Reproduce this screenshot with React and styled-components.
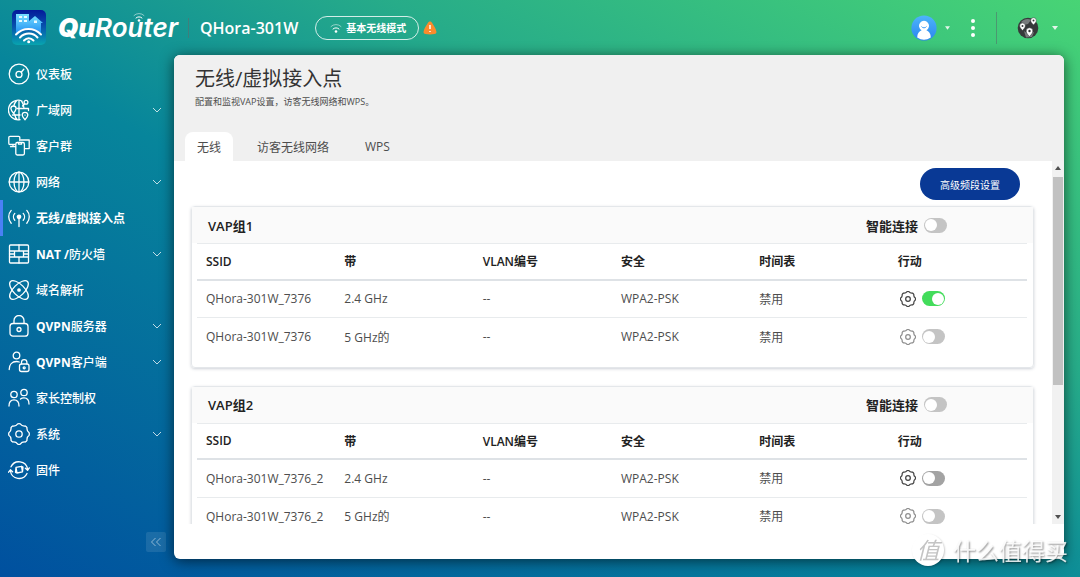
import React, { useState } from 'react';
import styled, { createGlobalStyle, css } from 'styled-components';


const GlobalStyle = createGlobalStyle`
  * {
    box-sizing: border-box;
  }

  body {
    margin: 0;
    font-family: 'Open Sans', 'Noto Sans CJK SC', sans-serif;
    font-size: 12px;
    color: #4d4d4d;
  }

  button {
    padding: 0;
    border: 0;
    background: none;
    font: inherit;
    color: inherit;
    cursor: pointer;
  }

  svg {
    display: block;
  }
`;

const Page = styled.div`
  display: flex;
  flex-direction: column;
  height: 100vh;
  overflow: hidden;
  background: linear-gradient(to top right, #00509f 0%, #07859b 45%, #27ac89 68%, #48d475 100%);
`;

const Header = styled.header`
  display: flex;
  align-items: center;
  height: 55px;
  padding: 0 22px 0 11px;
  color: #fff;
`;

const Brand = styled.a`
  display: flex;
  align-items: center;
  gap: 11px;
  color: #fff;
  text-decoration: none;
`;

const BrandName = styled.span`
  position: relative;
  font-family: Inter, sans-serif;
  font-size: 26px;
  font-style: italic;
  font-weight: 600;
  line-height: 34px;

  b {
    font-weight: 900;
  }

  svg {
    position: absolute;
    top: 0;
    left: 75px;
  }
`;

const Divider = styled.span`
  width: 1px;
  height: ${(props) => props.$height}px;
  background-color: ${(props) => props.color};
`;

const DeviceInfo = styled.div`
  display: flex;
  align-items: center;
  margin-left: 10px;
`;

const Model = styled.h1`
  margin: 0 17px 0 11px;
  font-size: 16px;
  font-weight: 600;
  line-height: 24px;
`;

const ModeButton = styled.button`
  display: flex;
  align-items: center;
  gap: 4px;
  height: 24px;
  margin-right: 4px;
  padding: 0 12px 0 14px;
  border: 1px solid rgba(255, 255, 255, 0.8);
  border-radius: 12px;
  font-size: 10px;
  font-weight: 600;
`;

const HeaderTools = styled.div`
  display: flex;
  align-items: center;
  gap: 20px;
  margin-left: auto;
`;

const ToolButton = styled.button`
  display: flex;
  align-items: center;
  gap: ${(props) => props.$gap || 0}px;
`;

const Body = styled.div`
  display: flex;
  flex: 1;
  min-height: 0;
  padding: 0 16px 18px 0;
`;

const Sidebar = styled.nav`
  display: flex;
  flex-direction: column;
  justify-content: space-between;
  width: 174px;
  color: #fff;
`;

const Menu = styled.ul`
  margin: 0;
  padding: 1px 0 0;
  list-style: none;
`;

const MenuLink = styled.a`
  display: flex;
  align-items: center;
  gap: 6px;
  height: 36px;
  padding: 0 12px 0 5px;
  border-left: 3px solid ${(props) => (props.$active ? '#4a80f5' : 'transparent')};
  color: #fff;
  font-weight: ${(props) => (props.$active ? 700 : 500)};
  text-decoration: none;

  span {
    flex: 1;
  }

  b {
    font-weight: 700;
  }
`;

const CollapseButton = styled.button`
  display: flex;
  align-items: center;
  justify-content: center;
  align-self: flex-end;
  width: 20px;
  height: 20px;
  margin: 0 8px 7px 0;
  border-radius: 2px;
  background-color: rgba(255, 255, 255, 0.1);
`;

const Panel = styled.main`
  display: flex;
  flex: 1;
  flex-direction: column;
  min-width: 0;
  padding-bottom: 35px;
  border-radius: 6px;
  background-color: #fff;
  box-shadow: 0 2px 14px rgba(0, 0, 0, 0.6);
`;

const PanelHeader = styled.div`
  padding: 10px 11px 0;
  border-radius: 6px 6px 0 0;
  background-color: #f0f0f0;
`;

const Title = styled.h2`
  margin: 0 10px;
  color: #333;
  font-size: 20px;
  font-weight: 400;
  line-height: 28px;
`;

const Subtitle = styled.p`
  margin: 0 10px 21px;
  font-size: 9px;
  line-height: 18px;
`;

const Tabs = styled.div`
  display: flex;
  gap: 12px;
`;

const Tab = styled.button`
  height: 29px;
  padding: 0 12px;
  border-radius: 8px 8px 0 0;
  ${(props) => props.$active && css`
    background-color: #fff;
  `}
`;

const ScrollBox = styled.div`
  display: flex;
  flex: 1;
  min-height: 0;
`;

const ScrollContent = styled.div`
  flex: 1;
  min-width: 0;
  padding: 7px 18px 18px 17px;
  overflow-y: auto;
  scrollbar-width: none;
`;

const ScrollBar = styled.div`
  display: flex;
  flex-direction: column;
  align-items: center;
  justify-content: space-between;
  width: 12px;
  padding: 5px 1px;
  background-color: #f1f1f1;
`;

const ScrollThumb = styled.div`
  width: 10px;
  height: 59%;
  margin: 7px 0 auto;
  background-color: #c1c1c1;
`;

const Actions = styled.div`
  display: flex;
  justify-content: flex-end;
  padding: 0 14px 6px 0;
`;

const PrimaryButton = styled.button`
  height: 32px;
  padding: 0 20px;
  border-radius: 16px;
  background-color: #093995;
  color: #fff;
  font-size: 10px;
`;

const Card = styled.section`
  margin-bottom: 18px;
  padding-bottom: 11px;
  border: 1px solid #e4e7ea;
  border-radius: 4px;
  box-shadow: 0 1px 3px rgba(60, 70, 100, 0.25);
`;

const CardHeader = styled.div`
  display: flex;
  align-items: center;
  justify-content: space-between;
  height: 36px;
  padding: 0 86px 0 16px;
  background-color: #fafafa;
  color: #222;
`;

const CardTitle = styled.h3`
  margin: 0;
  font-size: 13px;
  font-weight: 600;
`;

const SmartConnect = styled.label`
  display: flex;
  align-items: center;
  gap: 6px;
  font-size: 13px;
  font-weight: 700;
`;

const TableWrapper = styled.div`
  padding: 0 6px 0 5px;
`;

const Table = styled.table`
  width: 100%;
  border-collapse: collapse;
  table-layout: fixed;

  th,
  td {
    padding: 0 0 0 9px;
    text-align: left;
  }

  th {
    height: 36px;
    border-top: 1px solid #e8ebed;
    border-bottom: 2px solid #dee2e6;
    color: #222;
    font-weight: 600;
  }

  td {
    height: 38px;
  }

  tbody tr + tr td {
    border-top: 1px solid #e8ebed;
  }
`;

const RowActions = styled.div`
  display: flex;
  align-items: center;
  gap: 6px;
  padding-left: 2px;
`;

const GearButton = styled.button`
  color: #444;
  opacity: ${(props) => (props.disabled ? 0.6 : 1)};
`;

const Switch = styled.input`
  display: flex;
  align-items: center;
  width: 23px;
  height: 15px;
  margin: 0;
  padding: 1px;
  border-radius: 8px;
  appearance: none;
  background-color: ${(props) => (props.$dim ? '#c4c4c4' : '#a3a3a3')};

  &::before {
    content: '';
    width: 12px;
    height: 12px;
    border-radius: 50%;
    background-color: #fff;
  }

  &:checked {
    justify-content: flex-end;
    background-color: #43dc5b;
  }
`;

const Watermark = styled.div`
  position: fixed;
  right: 12px;
  bottom: 9px;
  display: flex;
  align-items: center;
  gap: 9px;
  color: rgba(255, 255, 255, 0.85);
  font-family: 'Noto Sans CJK SC', sans-serif;
  font-size: 23px;
  line-height: 36px;
  text-shadow: 1px 1px 2px rgba(0, 0, 0, 0.45);
  pointer-events: none;
`;

const WatermarkSeal = styled.span`
  width: 32px;
  height: 32px;
  border-radius: 50%;
  background-color: #fff;
  box-shadow: 1px 1px 2px rgba(0, 0, 0, 0.2);
  color: #c4c4c4;
  font-size: 23px;
  font-style: italic;
  line-height: 30px;
  text-align: center;
  text-shadow: none;
`;

// eight rounded teeth joined by shallow curves
const gearPath = (center, radius) => {
  const point = (deg, r) => {
    const rad = (deg * Math.PI) / 180;
    return `${(center + r * Math.cos(rad)).toFixed(2)} ${(center + r * Math.sin(rad)).toFixed(2)}`;
  };
  let path = `M${point(-7, radius)}`;
  for (let i = 0; i < 8; i += 1) {
    const deg = i * 45;
    path += `Q${point(deg, radius * 1.03)} ${point(deg + 7, radius)}Q${point(deg + 22.5, radius * 0.8)} ${point(deg + 38, radius)}`;
  }
  return `${path}Z`;
};

const Icon = ({ size = 22, weight = 1.3, children }) => (
  <svg
    width={size}
    height={size}
    viewBox="0 0 22 22"
    fill="none"
    stroke="currentColor"
    strokeWidth={weight}
    strokeLinecap="round"
    strokeLinejoin="round"
    aria-hidden="true"
  >
    {children}
  </svg>
);

const menuIcons = {
  dashboard: (
    <>
      <circle cx="11" cy="11" r="9.8" />
      <circle cx="11" cy="11.4" r="3" />
      <path d="M13.2 9.2l2.6-3" />
    </>
  ),
  wan: (
    <>
      <path d="M14 2A9.800 9.800 0 1 0 12 20.700M11 1.400v19.300M8.600 1.800C6.800 3.600 6.200 5 5.900 6.600M6.500 15c.5 2.400 1.200 4 2.600 5.500M13.500 2c1.600 2 2.300 4 2.500 7.500M4.500 16H12M9 9.500h11.500v2" />
      <circle cx="18" cy="3.200" r="1.900" />
      <path d="M16.700 4.700L14.500 7M5.500 14.200C3.700 12.200 2.900 11 2.900 9.600a2.600 2.600 0 0 1 5.200 0c0 1.400-.8 2.600-2.600 4.600zM17 20.800c-1.900-2-2.800-3.300-2.800-4.700a2.800 2.800 0 0 1 5.600 0c0 1.400-.9 2.700-2.800 4.700z" />
      <path d="M17 16.100h.1" />
    </>
  ),
  clients: (
    <>
      <path d="M7.500 9.500H2A1.200 1.200 0 0 1 .8 8.300V2.600A1.200 1.200 0 0 1 2 1.400h8.600a1.200 1.200 0 0 1 1.200 1.200v3M2.500 11.700h5M13 5h8.200v8.600h-4M5 9.500v2" />
      <rect x="7.800" y="7.500" width="8.600" height="12.500" rx="1.400" />
      <path d="M10.500 7.700v1.500h3V7.700" />
    </>
  ),
  network: (
    <>
      <circle cx="11" cy="11" r="9.800" />
      <ellipse cx="11" cy="11" rx="5" ry="9.800" />
      <path d="M11 1.200v19.600M1.200 11h19.600" />
    </>
  ),
  wireless: (
    <>
      <circle cx="11" cy="9.800" r="1.700" fill="currentColor" />
      <path d="M11 10v9.500M6.800 13.200a5 5 0 0 1 0-6.800M15.200 13.200a5 5 0 0 0 0-6.800M3.200 16.200a9.500 9.500 0 0 1 0-12.800M18.800 16.200a9.500 9.500 0 0 0 0-12.800" />
    </>
  ),
  firewall: (
    <>
      <rect x="1.500" y="2" width="19" height="18" rx="1" />
      <path d="M1.500 8h19M1.500 14h19M11 2v6M6.500 8v6M15.500 8v6M11 14v6M1.500 11h5M15.500 11h5" />
    </>
  ),
  dns: (
    <>
      <ellipse cx="11" cy="11" rx="12" ry="5.500" transform="rotate(45 11 11)" />
      <ellipse cx="11" cy="11" rx="12" ry="5.500" transform="rotate(-45 11 11)" />
      <circle cx="11" cy="11" r="1.200" fill="currentColor" />
    </>
  ),
  vpnServer: (
    <>
      <rect x="2" y="8.500" width="18" height="12.700" rx="3" />
      <path d="M6 8.300V5.500a5 5 0 0 1 10 0v2.800" />
      <circle cx="11" cy="14.500" r="2" />
    </>
  ),
  vpnClient: (
    <>
      <circle cx="8.500" cy="4.500" r="3.300" />
      <path d="M1.200 18.500c0-5 3-8 7.300-8 1 0 1.900.2 2.700.5" />
      <rect x="11.500" y="13" width="9.500" height="7.500" rx="2" />
      <path d="M13.500 12.800v-1.500a2.700 2.700 0 0 1 5.400 0v1.500" />
      <circle cx="16.200" cy="16.800" r="1" />
    </>
  ),
  parental: (
    <>
      <circle cx="6" cy="7.500" r="3.200" />
      <circle cx="16" cy="5.500" r="3.200" />
      <path d="M1 19c0-4 2-6.200 5-6.200s5 2.200 5 6.200M12.500 12c.9-.8 2-1.200 3.500-1.200 3 0 5 2.200 5 6.200" />
    </>
  ),
  system: (
    <>
      <path d={gearPath(11, 10.2)} />
      <circle cx="11" cy="11" r="3.200" />
    </>
  ),
  firmware: (
    <>
      <path d="M3 7.800A8.800 8.800 0 0 1 19.600 10M19 14.500A8.800 8.800 0 0 1 2.400 12M.6 13.200l1.800-2.400 2.200 2M17.400 9.300l2.200 2 1.700-2.400" />
      <path d="M8 8.300l5.500-1 1 5.500-5.500 1.200zM8 8.300l-.5 5 1.500.7M13.500 7.300l1.500.8-.5 4.700" />
    </>
  ),
};

const Caret = ({ width = 6 }) => (
  <svg width={width} height="4" viewBox="0 0 6 4" fill="#e3f5ea" aria-hidden="true">
    <path d="M0 0h6L3 4z" />
  </svg>
);

const ChevronDown = () => (
  <svg width="10" height="6" viewBox="0 0 10 6" fill="none" stroke="#fff" strokeOpacity=".75" aria-hidden="true">
    <path d="M1 1l4 4 4-4" />
  </svg>
);

const WifiGlyph = ({ size }) => (
  <svg width={size} height={size} viewBox="0 0 12 12" fill="none" stroke="#fff" strokeLinecap="round" aria-hidden="true">
    <path d="M1 4.500a7 7 0 0 1 10 0" opacity=".5" />
    <path d="M3 7a4.200 4.200 0 0 1 6 0" />
    <circle cx="6" cy="9.500" r="1.300" fill="#fff" stroke="none" />
  </svg>
);

const LogoMark = () => (
  <svg width="36" height="36" viewBox="0 0 36 36" aria-hidden="true">
    <defs>
      <linearGradient id="logoBase" x1="0" y1="0" x2="0" y2="1">
        <stop offset="0" stopColor="#04199a" />
        <stop offset=".5" stopColor="#0756ae" />
        <stop offset="1" stopColor="#08a5af" />
      </linearGradient>
      <linearGradient id="logoHouse" x1="0" y1="0" x2="0" y2="1">
        <stop offset="0" stopColor="#76e0ff" />
        <stop offset="1" stopColor="#1d8df2" />
      </linearGradient>
    </defs>
    <rect x="1" y="0" width="34" height="35" rx="5" fill="url(#logoBase)" />
    <path d="M5 4h13v7l6-5 8 7h-2v11c-6-7-18-8-25 0z" fill="url(#logoHouse)" />
    <path d="M8 6h3v2H8zM13 6h3v2h-3zM8 10h3v2H8zM13 10h3v2h-3zM23 10.500h3v2.500h-3z" fill="#e9fbff" />
    <g fill="none" stroke="#fff" strokeWidth="2" strokeLinecap="round">
      <path d="M5 24.500c7-7.500 18-7.500 25 0M9 27.500c5-5.200 13-5.200 17.500 0M13 30.500c3-3 6.500-3 9.500 0" />
    </g>
    <circle cx="17.700" cy="31.700" r="1.500" fill="#fff" />
  </svg>
);

const Warning = () => (
  <svg width="14" height="14" viewBox="0 0 14 14" role="img" aria-label="warning">
    <path d="M7 .5c1 0 1.700.6 2.300 1.700 2 3 3.600 5.800 4.100 8.300.3 1.600-.5 2.400-2 2.600a35 35 0 0 1-8.800 0c-1.500-.2-2.300-1-2-2.600.5-2.500 2.100-5.300 4.100-8.300C5.300 1.100 6 .5 7 .5z" fill="#fb8b2c" />
    <path d="M7 4v4M7 10v1" stroke="#fff" strokeWidth="1.500" />
  </svg>
);

const Avatar = () => (
  <svg width="26" height="26" viewBox="0 0 26 26" aria-hidden="true">
    <defs>
      <linearGradient id="avatarBase" x1="0" y1="0" x2="0" y2="1">
        <stop offset="0" stopColor="#4db5fb" />
        <stop offset="1" stopColor="#2b85ef" />
      </linearGradient>
    </defs>
    <circle cx="13" cy="13" r="12.600" fill="url(#avatarBase)" />
    <path d="M6.200 22.500c0-4 2-6.400 4.400-7.300a5 5 0 1 1 4.800 0c2.400.9 4.400 3.300 4.400 7.300a12 12 0 0 1-13.600 0z" fill="#fff" />
    <path d="M10.500 11.500a3 3 0 0 0 5 0" fill="none" stroke="#3f9ff6" />
  </svg>
);

const Globe = () => (
  <svg width="22" height="22" viewBox="0 0 22 22" aria-hidden="true">
    <circle cx="11" cy="11" r="10.300" fill="#36393a" />
    <path d="M4 5c3-3 7-4 10-2l-3 4-4 1zM7 14l4 3 6-2-2 5-6 .5z" fill="#777b7c" />
    <g fill="#fff" stroke="#36393a" strokeWidth=".5">
      <path d="M5.500 13.500C3.700 11.500 2.700 10.400 2.700 8.800a2.800 2.800 0 0 1 5.600 0c0 1.600-1 2.700-2.800 4.700zM16.500 8c-2-2.200-2.800-3.200-2.800-4.500a2.800 2.800 0 0 1 5.600 0c0 1.300-.8 2.300-2.800 4.500zM12.500 19.500c-2.400-2.600-3.300-3.800-3.300-5.400a3.300 3.300 0 0 1 6.600 0c0 1.600-.9 2.800-3.300 5.400z" />
    </g>
    <g fill="#36393a">
      <circle cx="5.500" cy="8.900" r="1" />
      <circle cx="16.500" cy="3.600" r="1" />
      <circle cx="12.500" cy="14" r="1.200" />
    </g>
  </svg>
);

const menu = [
  { icon: 'dashboard', label: '仪表板' },
  { icon: 'wan', label: '广域网', nested: true },
  { icon: 'clients', label: '客户群' },
  { icon: 'network', label: '网络', nested: true },
  { icon: 'wireless', label: '无线/虚拟接入点', active: true },
  { icon: 'firewall', prefix: 'NAT /', label: '防火墙', nested: true },
  { icon: 'dns', label: '域名解析' },
  { icon: 'vpnServer', prefix: 'QVPN', label: '服务器', nested: true },
  { icon: 'vpnClient', prefix: 'QVPN', label: '客户端', nested: true },
  { icon: 'parental', label: '家长控制权' },
  { icon: 'system', label: '系统', nested: true },
  { icon: 'firmware', label: '固件' },
];

const tabs = ['无线', '访客无线网络', 'WPS'];

const columns = ['SSID', '带', 'VLAN编号', '安全', '时间表', '行动'];

const groups = [
  {
    name: 'VAP组1',
    rows: [
      { ssid: 'QHora-301W_7376', band: '2.4 GHz', enabled: true },
      { ssid: 'QHora-301W_7376', band: '5 GHz的', dim: true },
    ],
  },
  {
    name: 'VAP组2',
    rows: [
      { ssid: 'QHora-301W_7376_2', band: '2.4 GHz' },
      { ssid: 'QHora-301W_7376_2', band: '5 GHz的', dim: true },
    ],
  },
];

const VapCard = ({ group }) => (
  <Card>
    <CardHeader>
      <CardTitle>{group.name}</CardTitle>
      <SmartConnect>
        智能连接
        <Switch type="checkbox" role="switch" $dim />
      </SmartConnect>
    </CardHeader>
    <TableWrapper>
      <Table>
        <thead>
          <tr>
            {columns.map((column) => <th key={column}>{column}</th>)}
          </tr>
        </thead>
        <tbody>
          {group.rows.map((row) => (
            <tr key={row.band}>
              <td>{row.ssid}</td>
              <td>{row.band}</td>
              <td>--</td>
              <td>WPA2-PSK</td>
              <td>禁用</td>
              <td>
                <RowActions>
                  <GearButton aria-label={`${row.ssid} ${row.band}`} disabled={row.dim}>
                    <Icon size={16} weight={1.7}>{menuIcons.system}</Icon>
                  </GearButton>
                  <Switch
                    type="checkbox"
                    role="switch"
                    aria-label={`${row.ssid} ${row.band}`}
                    defaultChecked={row.enabled}
                    $dim={row.dim}
                  />
                </RowActions>
              </td>
            </tr>
          ))}
        </tbody>
      </Table>
    </TableWrapper>
  </Card>
);

const App = () => {
  const [activeTab, setActiveTab] = useState(tabs[0]);

  return (
    <Page>
      <GlobalStyle />
      <Header>
        <Brand href="#">
          <LogoMark />
          <BrandName>
            <b>Qu</b>
            Router
            <WifiGlyph size={12} />
          </BrandName>
        </Brand>
        <DeviceInfo>
          <Divider $height={20} color="rgba(90, 110, 110, 0.6)" />
          <Model>QHora-301W</Model>
          <ModeButton>
            <WifiGlyph size={12} />
            基本无线模式
          </ModeButton>
          <Warning />
        </DeviceInfo>
        <HeaderTools>
          <ToolButton $gap={8} aria-label="account">
            <Avatar />
            <Caret width={5} />
          </ToolButton>
          <ToolButton aria-label="more">
            <svg width="6" height="20" viewBox="0 0 6 20" fill="#fff" aria-hidden="true">
              <circle cx="3" cy="3" r="2" />
              <circle cx="3" cy="10" r="2" />
              <circle cx="3" cy="17" r="2" />
            </svg>
          </ToolButton>
          <Divider $height={32} color="rgba(80, 130, 110, 0.7)" />
          <ToolButton $gap={13} aria-label="region">
            <Globe />
            <Caret />
          </ToolButton>
        </HeaderTools>
      </Header>
      <Body>
        <Sidebar>
          <Menu>
            {menu.map((item) => (
              <li key={item.icon}>
                <MenuLink href="#" $active={item.active}>
                  <Icon>{menuIcons[item.icon]}</Icon>
                  <span>
                    {item.prefix && <b>{item.prefix}</b>}
                    {item.label}
                  </span>
                  {item.nested && <ChevronDown />}
                </MenuLink>
              </li>
            ))}
          </Menu>
          <CollapseButton aria-label="collapse">
            <svg width="12" height="10" viewBox="0 0 12 10" fill="none" stroke="#fff" strokeOpacity=".5" aria-hidden="true">
              <path d="M5.500 1l-4 4 4 4M10.500 1l-4 4 4 4" />
            </svg>
          </CollapseButton>
        </Sidebar>
        <Panel>
          <PanelHeader>
            <Title>无线/虚拟接入点</Title>
            <Subtitle>配置和监视VAP设置，访客无线网络和WPS。</Subtitle>
            <Tabs role="tablist">
              {tabs.map((tab) => (
                <Tab
                  key={tab}
                  role="tab"
                  aria-selected={tab === activeTab}
                  $active={tab === activeTab}
                  onClick={() => setActiveTab(tab)}
                >
                  {tab}
                </Tab>
              ))}
            </Tabs>
          </PanelHeader>
          <ScrollBox>
            <ScrollContent>
              <Actions>
                <PrimaryButton>高级频段设置</PrimaryButton>
              </Actions>
              {groups.map((group) => <VapCard key={group.name} group={group} />)}
            </ScrollContent>
            <ScrollBar aria-hidden="true">
              <svg width="6" height="4" viewBox="0 0 6 4" fill="#505050">
                <path d="M0 4h6L3 0z" />
              </svg>
              <ScrollThumb />
              <svg width="6" height="4" viewBox="0 0 6 4" fill="#505050">
                <path d="M0 0h6L3 4z" />
              </svg>
            </ScrollBar>
          </ScrollBox>
        </Panel>
      </Body>
      <Watermark>
        <WatermarkSeal>值</WatermarkSeal>
        什么值得买
      </Watermark>
    </Page>
  );
};

export default App;
